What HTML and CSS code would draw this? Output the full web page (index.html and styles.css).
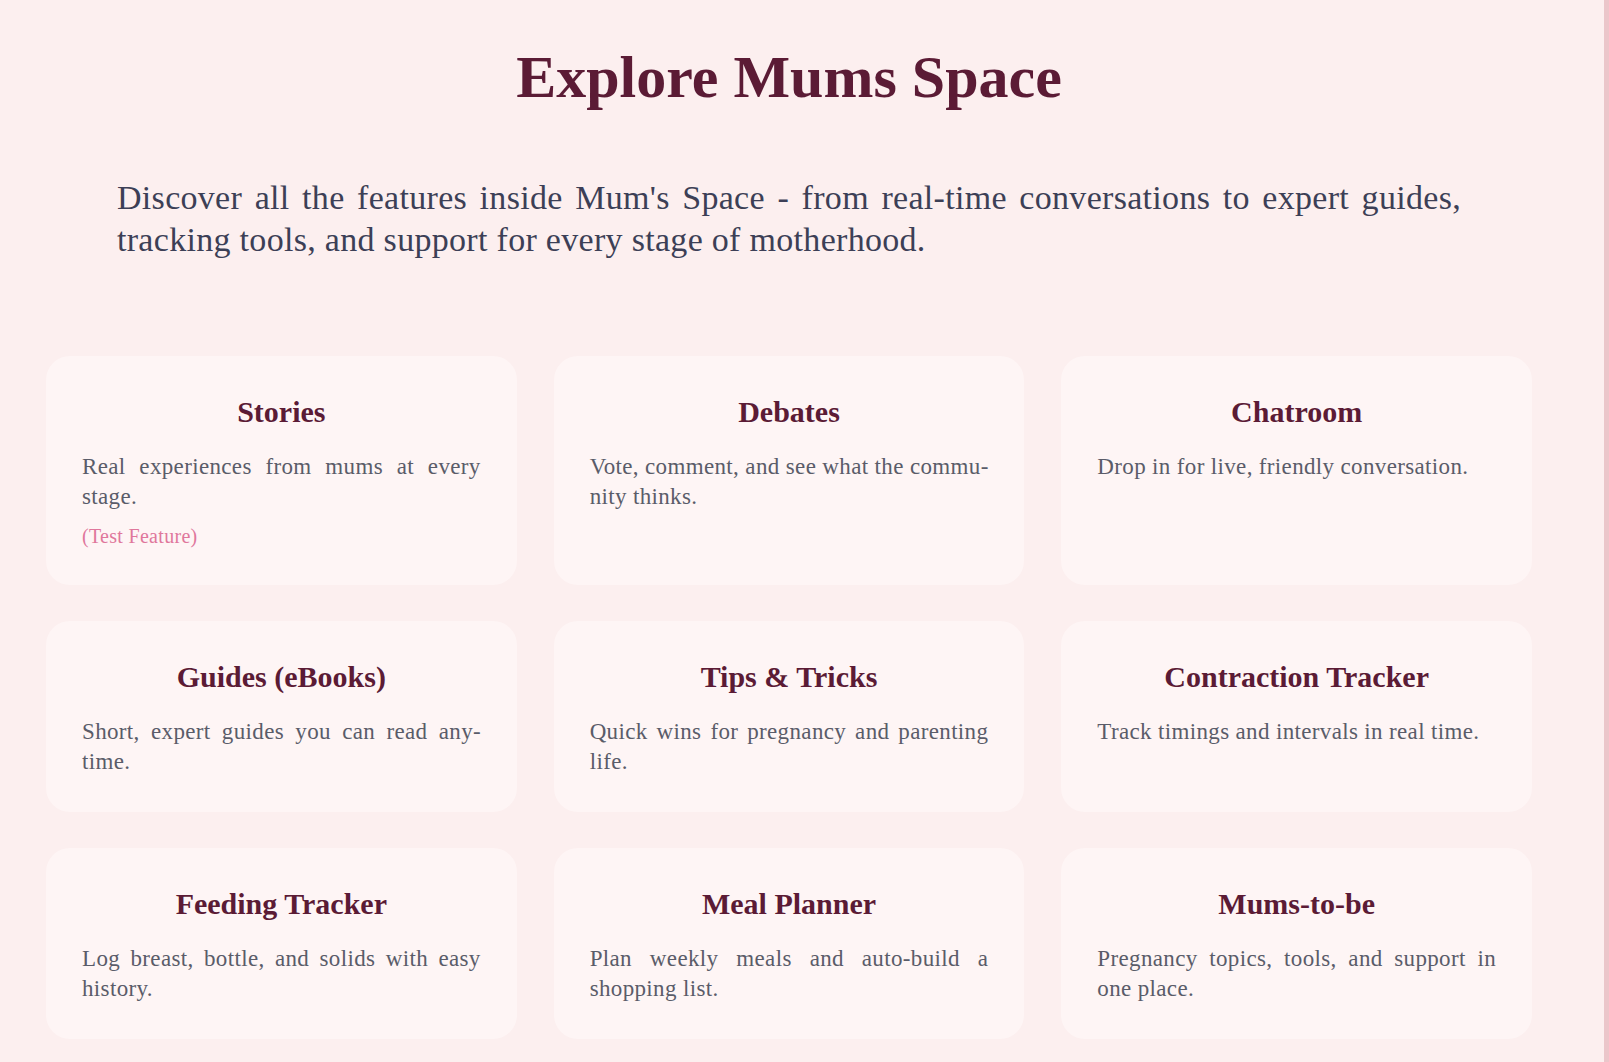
FILE: index.html
```html
<!DOCTYPE html>
<html lang="en">
<head>
<meta charset="utf-8">
<title>Explore Mums Space</title>
<link rel="stylesheet" href="styles.css">
</head>
<body>
<div class="page">
  <main class="main">
    <h1 class="title">Explore Mums Space</h1>
    <p class="intro"><span class="intro-lead">Discover all the features inside Mum's Space - from real-time conversations to expert guides,</span> tracking tools, and support for every stage of motherhood.</p>
    <section class="grid">
      <article class="card">
        <h2 class="card-title">Stories</h2>
        <p class="card-text">Real experiences from mums at every stage.</p>
        <p class="card-note">(Test Feature)</p>
      </article>
      <article class="card">
        <h2 class="card-title">Debates</h2>
        <p class="card-text">Vote, comment, and see what the commu&shy;nity thinks.</p>
      </article>
      <article class="card">
        <h2 class="card-title">Chatroom</h2>
        <p class="card-text">Drop in for live, friendly conversation.</p>
      </article>
      <article class="card">
        <h2 class="card-title">Guides (eBooks)</h2>
        <p class="card-text">Short, expert guides you can read any&shy;time.</p>
      </article>
      <article class="card">
        <h2 class="card-title">Tips &amp; Tricks</h2>
        <p class="card-text">Quick wins for pregnancy and parenting life.</p>
      </article>
      <article class="card">
        <h2 class="card-title">Contraction Tracker</h2>
        <p class="card-text">Track timings and intervals in real time.</p>
      </article>
      <article class="card">
        <h2 class="card-title">Feeding Tracker</h2>
        <p class="card-text">Log breast, bottle, and solids with easy history.</p>
      </article>
      <article class="card">
        <h2 class="card-title">Meal Planner</h2>
        <p class="card-text">Plan weekly meals and auto-build a shopping list.</p>
      </article>
      <article class="card">
        <h2 class="card-title">Mums-to-be</h2>
        <p class="card-text">Pregnancy topics, tools, and support in one place.</p>
      </article>
    </section>
  </main>
  <div class="edge"></div>
</div>
</body>
</html>
```

FILE: styles.css
```css
* { box-sizing: border-box; }

html, body {
  margin: 0;
  padding: 0;
  background: #fcefef;
  font-family: "Liberation Serif", "Times New Roman", serif;
}

.page {
  display: flex;
  min-height: 1062px;
}

.main {
  width: 1578px;
  flex: 0 0 1578px;
  padding-top: 41px;
}

.edge {
  flex: 1;
  background: #fcefef;
  border-left: 26px solid #fcefef;
}
.edge::after {
  content: "";
  display: block;
  width: 5px;
  height: 100%;
  background: #ebc6ca;
  margin-left: auto;
}

.title {
  margin: 0;
  text-align: center;
  font-size: 60px;
  line-height: 72px;
  font-weight: 700;
  color: #5b1b35;
}

.intro {
  margin: 64px 117px 0;
  font-size: 34px;
  line-height: 42px;
  letter-spacing: 0.3px;
  color: #3c3f56;
  text-align: justify;
}

.intro-lead {
  display: block;
  text-align: justify;
  text-align-last: justify;
}

.grid {
  margin: 95px 46px 0;
  display: grid;
  grid-template-columns: repeat(3, 1fr);
  column-gap: 37px;
  row-gap: 36px;
}

.card {
  background: #fef5f5;
  border-radius: 24px;
  padding: 38px 36px 35px;
}

.card-title {
  margin: 0 0 22px;
  text-align: center;
  font-size: 30px;
  line-height: 36px;
  font-weight: 700;
  color: #5b1b35;
}

.card-text {
  margin: 0;
  font-size: 23px;
  line-height: 30px;
  letter-spacing: 0.35px;
  color: #5a5c69;
  text-align: justify;
  hyphens: manual;
}

.card-note {
  margin: 11px 0 0;
  font-size: 20px;
  line-height: 27px;
  letter-spacing: 0.3px;
  color: #e0779c;
}
```
